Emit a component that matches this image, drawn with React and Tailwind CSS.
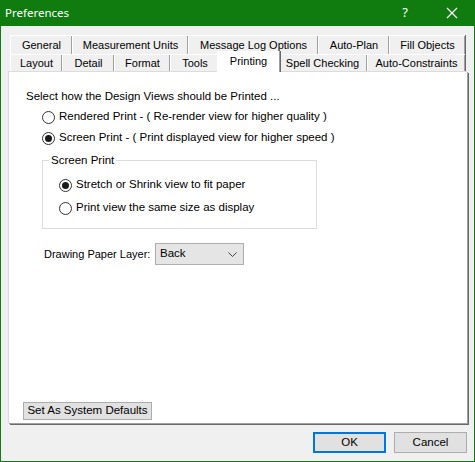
import React from "react";

const F = { fontFamily: '"Liberation Sans", Arial, sans-serif' };

function Tab({ w, label, selected }) {
  if (selected) {
    return (
      <div
        className="relative z-10 -mx-[2px] -mt-[3px] flex h-[21px] items-start justify-center whitespace-nowrap border-t border-l border-white bg-white pt-[1px] text-[11px] text-black shadow-[1px_0_0_#a0a0a0,2px_0_0_#696969]"
        style={{ width: w + 4 }}
      >
        {label}
      </div>
    );
  }
  return (
    <div
      className="flex h-full items-center justify-center whitespace-nowrap border-t border-l border-white bg-[#f0f0f0] text-[11px] text-black shadow-[inset_-1px_0_0_#a0a0a0,1px_0_0_#696969]"
      style={{ width: w }}
    >
      {label}
    </div>
  );
}

function Radio({ checked }) {
  return (
    <div className="flex h-[13px] w-[13px] shrink-0 items-center justify-center rounded-full border border-[#333] bg-white">
      {checked && <div className="h-[7px] w-[7px] rounded-full bg-[#1a1a1a]" />}
    </div>
  );
}

export default function App() {
  return (
    <div className="flex h-[462px] w-[475px] flex-col bg-[#107c10] text-[11.5px] text-black" style={F}>
      {/* title bar */}
      <div className="flex h-[26px] shrink-0 items-center text-white">
        <div className="pl-[5px] text-[11.5px]" style={{ fontFamily: '"Noto Sans", "Open Sans", sans-serif' }}>
          Preferences
        </div>
        <div className="ml-auto flex items-center">
          <span className="mr-[38px] text-[13px]" style={{ fontFamily: '"Noto Sans", sans-serif' }}>?</span>
          <svg width="12" height="12" viewBox="0 0 12 12" className="mr-[17px]">
            <path d="M1 1 L11 11 M11 1 L1 11" stroke="white" strokeWidth="1.2" />
          </svg>
        </div>
      </div>

      {/* body */}
      <div className="mx-[1px] mb-[1px] flex flex-1 flex-col bg-[#f0f0f0] pl-[7px] pr-[7px] pt-[9px]">
        {/* tabs */}
        <div className="flex flex-col pl-[2px]">
          <div className="flex h-[19px]">
            <Tab w={62} label="General" />
            <Tab w={116} label="Measurement Units" />
            <Tab w={130} label="Message Log Options" />
            <Tab w={71} label="Auto-Plan" />
            <Tab w={76} label="Fill Objects" />
          </div>
          <div className="flex h-[17px]">
            <Tab w={52} label="Layout" />
            <Tab w={52} label="Detail" />
            <Tab w={56} label="Format" />
            <Tab w={49} label="Tools" />
            <Tab w={58} label="Printing" selected />
            <Tab w={90} label="Spell Checking" />
            <Tab w={98} label="Auto-Constraints" />
          </div>
        </div>

        {/* panel */}
        <div className="flex h-[352px] w-[459px] flex-col border-t border-l border-[#dcdcdc] bg-white shadow-[1px_1px_0_#a0a0a0,2px_2px_0_#696969] pl-[17px]">
          <div className="mt-[17px] h-[14px] whitespace-nowrap leading-[14px]">Select how the Design Views should be Printed ...</div>
          <div className="mt-[7px] flex h-[14px] items-center gap-[4px] whitespace-nowrap pl-[16px]">
            <Radio />
            <span>Rendered Print - ( Re-render view for higher quality )</span>
          </div>
          <div className="mt-[7px] flex h-[14px] items-center gap-[4px] whitespace-nowrap pl-[16px]">
            <Radio checked />
            <span>Screen Print - ( Print displayed view for higher speed )</span>
          </div>

          <div className="relative ml-[16px] mt-[15px] h-[69px] w-[275px] border border-[#dcdcdc]">
            <div className="absolute -top-[8px] left-[6px] bg-white px-[2px] leading-[14px]">Screen Print</div>
            <div className="mt-[17px] flex h-[14px] items-center gap-[4px] whitespace-nowrap pl-[16px]">
              <Radio checked />
              <span>Stretch or Shrink view to fit paper</span>
            </div>
            <div className="mt-[9px] flex h-[14px] items-center gap-[4px] whitespace-nowrap pl-[16px]">
              <Radio />
              <span>Print view the same size as display</span>
            </div>
          </div>

          <div className="mt-[14px] flex items-center pl-[18px]">
            <span className="w-[111px] shrink-0 whitespace-nowrap text-[11px]">Drawing Paper Layer:</span>
            <div className="flex h-[22px] w-[89px] items-center border border-[#adadad] bg-[#e5e5e5] pl-[4px] pr-[6px]">
              <span>Back</span>
              <svg width="9" height="5" viewBox="0 0 9 5" className="ml-auto">
                <path d="M0.5 0.5 L4.5 4.5 L8.5 0.5" stroke="#444" strokeWidth="1" fill="none" />
              </svg>
            </div>
          </div>

          <div className="mt-auto mb-[3px] -ml-[3px] flex h-[18px] w-[129px] items-center justify-center whitespace-nowrap border border-[#adadad] bg-[#e1e1e1]">
            Set As System Defaults
          </div>
        </div>

        {/* footer */}
        <div className="mt-[9px] flex justify-end gap-[8px]">
          <div className="flex h-[21px] w-[73px] items-center justify-center border-2 border-[#0078d7] bg-[#e1e1e1]">OK</div>
          <div className="flex h-[21px] w-[73px] items-center justify-center border border-[#adadad] bg-[#e1e1e1]">Cancel</div>
        </div>
      </div>
    </div>
  );
}
